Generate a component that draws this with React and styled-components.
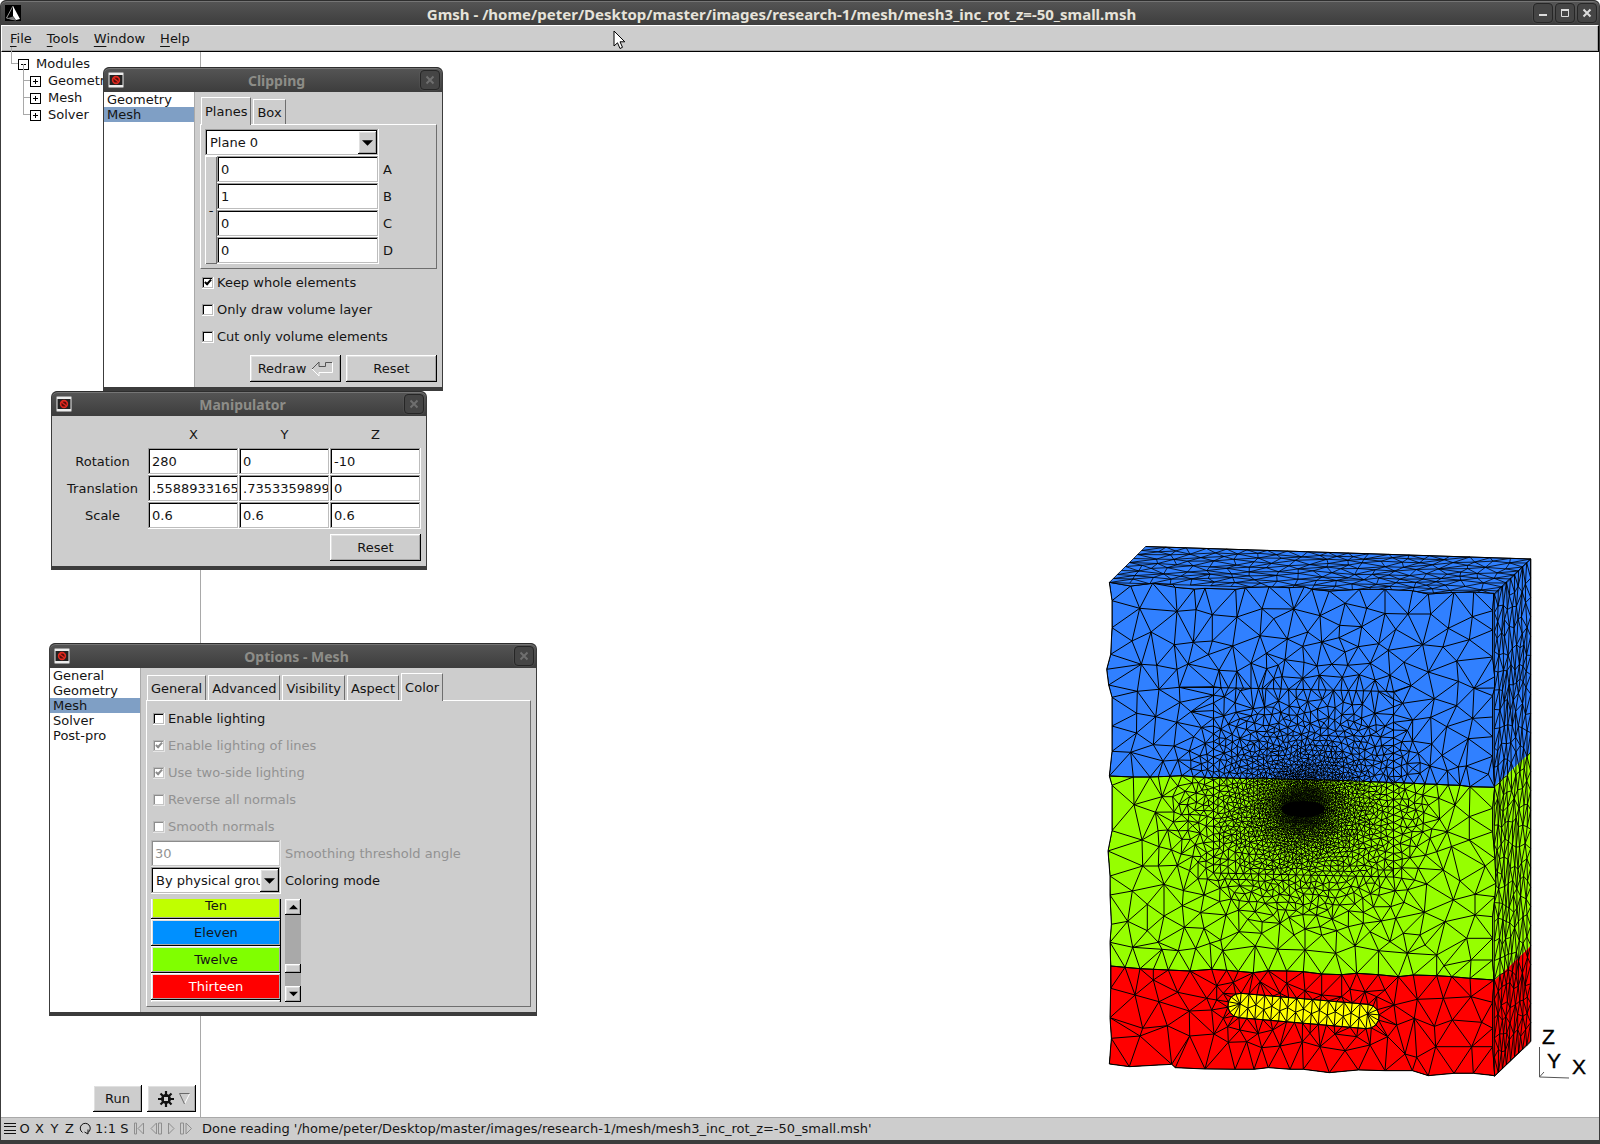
import React, { useMemo, useState } from "react";
import styled, { createGlobalStyle, css } from "styled-components";

const C = {
  face: "#cdcdcd",
  frame: "#3c3c3c",
  line: "#a9a9a9",
  ink: "#141414",
  dim: "#929292",
  select: "#7f9fc5",
};

const raised = css`
  box-shadow: inset -1px -1px 0 #000, inset 1px 1px 0 #fff,
    inset -2px -2px 0 #a6a6a6, inset 2px 2px 0 #e0e0e0;
`;

const sunken = css`
  box-shadow: inset 0 -1px 0 #fff, inset -1px 0 0 #fff, inset 1px 1px 0 #9c9c9c,
    inset -2px -2px 0 #bdbdbd, inset 2px 2px 0 #000;
`;

const sunkenDim = css`
  box-shadow: inset -1px -1px 0 #e6e6e6, inset 1px 1px 0 #b8b8b8,
    inset -2px -2px 0 #c6c6c6, inset 2px 2px 0 #8c8c8c;
`;

const Global = createGlobalStyle`
  *, *::before, *::after { box-sizing: border-box; }
  body { margin: 0; background: #fff; }
  body, button, input, select {
    font-family: "DejaVu Sans", sans-serif;
    font-size: 13px;
    line-height: 15px;
    color: ${C.ink};
  }
  button, input, select { margin: 0; padding: 0; border: 0; border-radius: 0; }
  ul { list-style: none; margin: 0; padding: 0; }
`;

/* ---------- window chrome ---------- */

const Screen = styled.div`
  position: relative;
  display: flex;
  flex-direction: column;
  min-height: 100vh;
  background: ${C.frame};
  padding: 0 1px 4px;
  border-radius: 6px 6px 0 0;
`;

const TitleBar = styled.header`
  display: flex;
  align-items: flex-start;
  height: 25px;
  padding: 2px 2px 0 4px;
  border-top: 1px solid #2e2e2e;
  box-shadow: inset 0 1px 0 #757575;
  background: linear-gradient(#555, #3d3d3d);
  border-radius: 6px 6px 0 0;
  svg { display: block; }
`;

const TitleIcon = styled.span`
  flex: 0 0 25px;
  padding-top: 2px;
`;

const Title = styled.h1`
  flex: 1;
  margin: 0;
  text-align: center;
  font: bold ${(p) => (p.$active ? 15 : 14)}px/22px "Noto Sans", sans-serif;
  color: ${(p) => (p.$active ? "#e6e3da" : "#8d8d88")};
  white-space: nowrap;
`;

const TitleButtons = styled.div`
  display: flex;
  gap: 2px;
`;

const TitleButton = styled.button`
  width: 20px;
  height: 20px;
  display: grid;
  place-items: center;
  background: #454545;
  border: 1px solid #262626;
  border-radius: 4px;
  box-shadow: 0 0 0 1px rgba(120, 120, 120, 0.15);
`;

const Dialog = styled.section`
  position: absolute;
  left: ${(p) => p.$x}px;
  top: ${(p) => p.$y}px;
  width: ${(p) => p.$w}px;
  background: ${C.frame};
  padding: 0 1px 4px;
  border-radius: 6px 6px 0 0;
`;

const DialogBody = styled.div`
  display: flex;
  background: ${C.face};
`;

/* ---------- main window ---------- */

const MenuBar = styled.nav`
  display: flex;
  gap: 13px;
  height: 27px;
  padding: 0 7px;
  align-items: center;
  background: ${C.face};
  border-top: 1px solid #fff;
  border-left: 1px solid #fff;
  border-bottom: 1px solid #000;
  border-right: 1px solid #000;
  box-shadow: inset -1px -1px 0 #a6a6a6;
`;

const MenuItem = styled.button`
  background: none;
  height: 24px;
  padding: 0 1px;
  &::first-letter { text-decoration: underline; text-underline-offset: 3px; }
`;

const Workspace = styled.div`
  flex: 1;
  display: flex;
  background: #fff;
`;

const Sidebar = styled.aside`
  flex: 0 0 200px;
  display: flex;
  flex-direction: column;
  justify-content: space-between;
  border-right: 1px solid ${C.line};
`;

const Tree = styled.ul`
  padding: 3px 0 0 17px;
`;

const Branch = styled.ul`
  padding-left: 12px;
`;

const Node = styled.li`
  position: relative;
  line-height: 17px;
  &::before {
    content: "";
    position: absolute;
    left: -7px;
    top: -8px;
    width: 7px;
    height: 17px;
    border: solid ${C.line};
    border-width: 0 0 1px 1px;
  }
`;

const Toggle = styled.button`
  position: relative;
  width: 11px;
  height: 11px;
  margin-right: 7px;
  vertical-align: -1px;
  background: #fff;
  border: 1px solid #000;
  &::before, &::after {
    content: "";
    position: absolute;
    left: 2px;
    top: 4px;
    width: 5px;
    height: 1px;
    background: #000;
  }
  &::after {
    transform: rotate(90deg);
    display: ${(p) => (p.$open ? "none" : "block")};
  }
`;

const RunBar = styled.div`
  display: flex;
  justify-content: flex-end;
  gap: 5px;
  padding: 5px 4px 5px 0;
`;

const Button = styled.button`
  display: flex;
  align-items: center;
  justify-content: center;
  gap: 5px;
  width: ${(p) => p.$w || 91}px;
  height: 27px;
  background: ${C.face};
  ${raised}
`;

const SettingsButton = styled(Button)`
  padding-left: 4px;
`;

const Viewport = styled.main`
  flex: 1;
  display: flex;
  align-items: flex-end;
  justify-content: flex-end;
  min-width: 0;
  svg { display: block; }
`;

const StatusBar = styled.footer`
  display: flex;
  align-items: center;
  height: 23px;
  padding: 0 0 2px 1px;
  background: ${C.face};
  border-top: 1px solid ${C.line};
`;

const StatusTools = styled.div`
  flex: 0 0 200px;
  display: flex;
  align-items: center;
`;

const StatusTool = styled.button`
  width: ${(p) => p.$w || 15}px;
  height: 20px;
  display: grid;
  place-items: center;
  background: none;
`;

const Pointer = styled.svg`
  position: absolute;
  left: 613px;
  top: 30px;
  pointer-events: none;
`;

/* ---------- dialog contents ---------- */

const List = styled.ul`
  flex: 0 0 91px;
  background: #fff;
  border-right: 1px solid ${C.line};
`;

const ListItem = styled.li`
  padding-left: 3px;
  background: ${(p) => (p.$on ? C.select : "none")};
`;

const Pane = styled.div`
  flex: 1;
  min-width: 0;
  padding: 5px;
`;

const Tabs = styled.div`
  display: flex;
  align-items: flex-end;
  gap: 2px;
  padding-left: 1px;
`;

const Tab = styled.button`
  position: relative;
  height: ${(p) => (p.$on ? 28 : 25)}px;
  margin-bottom: ${(p) => (p.$on ? -1 : 0)}px;
  padding: ${(p) => (p.$on ? "0 3px 1px" : "0 3px")};
  background: ${C.face};
  border: solid;
  border-width: 1px 1px 0 1px;
  border-color: #fff #6e6e6e #fff #fff;
`;

const TabPanel = styled.div`
  padding: 4px;
  border: 1px solid;
  border-color: #fff #6e6e6e #6e6e6e #fff;
`;

const Row = styled.div`
  display: flex;
  align-items: center;
  height: 27px;
  gap: 4px;
`;

const Field = styled.input`
  width: ${(p) => p.$w}px;
  height: 27px;
  padding: 0 2px 0 4px;
  background: #fff;
  outline: none;
  ${sunken}
  &:disabled { color: ${C.dim}; ${sunkenDim} }
`;

const Choice = styled.span`
  position: relative;
  display: block;
  width: ${(p) => p.$w}px;
  height: 27px;
`;

const Select = styled.select`
  appearance: none;
  width: 100%;
  height: 27px;
  padding: 0 20px 0 5px;
  overflow: hidden;
  background: #fff;
  outline: none;
  ${sunken}
`;

const ChoiceArrow = styled.span`
  position: absolute;
  right: 2px;
  top: 2px;
  width: 19px;
  height: 23px;
  display: grid;
  place-items: center;
  background: ${C.face};
  pointer-events: none;
  ${raised}
`;

const PlaneFields = styled.div`
  display: flex;
`;

const FlipButton = styled.button`
  width: 12px;
  background: ${C.face};
  box-shadow: inset 1px 1px 0 #fff, inset -1px -1px 0 #6e6e6e;
`;

const CheckLabel = styled.label`
  display: flex;
  align-items: center;
  gap: 3px;
  height: 27px;
  padding-left: 2px;
  color: ${(p) => (p.$off ? C.dim : C.ink)};
`;

const SideLabel = styled.label`
  color: ${(p) => (p.$off ? C.dim : C.ink)};
`;

const Check = styled.input`
  appearance: none;
  position: relative;
  width: 12px;
  height: 12px;
  background: #fff;
  ${(p) => (p.disabled ? sunkenDim : sunken)}
  &:checked::after {
    content: "";
    position: absolute;
    left: 4px;
    top: 1px;
    width: 4px;
    height: 7px;
    border: solid ${(p) => (p.disabled ? "#8c8c8c" : "#000")};
    border-width: 0 2px 2px 0;
    transform: rotate(42deg);
  }
`;

const Actions = styled.div`
  display: flex;
  justify-content: flex-end;
  gap: 5px;
  padding-top: 5px;
`;

const ManipBody = styled.div`
  padding: 5px;
  background: ${C.face};
`;

const ManipTable = styled.table`
  border-collapse: collapse;
  table-layout: fixed;
  width: 100%;
  th, td { padding: 0; height: 27px; text-align: center; font-weight: normal; }
  input { display: block; }
`;

const ColorArea = styled.div`
  display: flex;
  gap: 4px;
  height: 103px;
  margin-top: 5px;
`;

const ColorClip = styled.div`
  width: 130px;
  overflow: hidden;
`;

const ColorList = styled.div`
  margin-top: -7px;
`;

const ColorButton = styled.button`
  display: block;
  width: 130px;
  height: 27px;
  color: ${(p) => (p.$light ? "#fff" : C.ink)};
  background: ${(p) => p.$c};
  ${raised}
`;

const ScrollBar = styled.div`
  width: 16px;
  display: flex;
  flex-direction: column;
  background: ${C.line};
`;

const ScrollButton = styled.button`
  height: 16px;
  display: grid;
  place-items: center;
  background: ${C.face};
  ${raised}
`;

const ScrollTrack = styled.div`
  flex: 1;
  display: flex;
  flex-direction: column;
  justify-content: flex-end;
  padding-bottom: 13px;
`;

const ScrollThumb = styled.div`
  height: 9px;
  background: ${C.face};
  ${raised}
`;

/* ---------- icons ---------- */

const GmshLogo = () => (
  <svg width="16" height="16" viewBox="0 0 16 16">
    <rect width="16" height="16" fill="#000" />
    <path d="M8 1 L15 14 L11 15 L8 11Z" fill="#fff" />
    <path d="M8 1 L1.500 13 L8 14.500 L11 15" fill="none" stroke="#aaa" strokeWidth=".9" />
    <path d="M1.500 13.500 L8 11.500 L11 15Z" fill="#777" />
  </svg>
);

const XLogo = () => (
  <svg width="16" height="16" viewBox="0 0 16 16">
    <rect x=".5" y=".5" width="15" height="15" rx="1" fill="#ececec" stroke="#999" />
    <rect x="1.500" y="3" width="13" height="10" fill="#222" />
    <circle cx="8" cy="8" r="3.400" fill="#5a0d0a" stroke="#e02a20" strokeWidth="1.600" />
    <path d="M5.500 6 L10.500 10" stroke="#e02a20" strokeWidth="1.500" />
  </svg>
);

const CrossIcon = ({ c = "#6f6f6f" }) => (
  <svg width="10" height="10" viewBox="0 0 10 10">
    <path d="M1.500 1.500 L8.500 8.500 M8.500 1.500 L1.500 8.500" stroke={c} strokeWidth="2" />
  </svg>
);

const Triangle = ({ up, w = 11 }) => (
  <svg width={w} height="6" viewBox="0 0 10 5">
    <path d={up ? "M0 5 L5 0 L10 5Z" : "M0 0 L5 5 L10 0Z"} fill="#000" />
  </svg>
);

const ReturnIcon = () => (
  <svg width="22" height="16" viewBox="0 0 22 16" fill="none">
    <path d="M8 15 L8 11.500 L21.500 11.500 L21.500 1.500" stroke="#fff" />
    <path d="M1 8 L8 15" stroke="#fff" />
    <path d="M1 8 L8 1 L8 5.500 L14.500 5.500 L14.500 1.500 L21 1.500" stroke="#555" />
  </svg>
);

const GearIcon = () => (
  <svg width="16" height="16" viewBox="0 0 16 16">
    <g stroke="#111" strokeWidth="2.200">
      <path d="M8 0V16M0 8H16M2.500 2.500L13.500 13.500M13.500 2.500L2.500 13.500" />
    </g>
    <circle cx="8" cy="8" r="5" fill="#111" />
    <rect x="6" y="6" width="4" height="4" fill={C.face} />
  </svg>
);

const HollowTriangle = () => (
  <svg width="11" height="12" viewBox="0 0 11 12" fill="none">
    <path d="M10.500 1 L5.500 11" stroke="#fff" />
    <path d="M5.500 11 L.5 .5 H10.500" stroke="#6a6a6a" />
  </svg>
);

const Glyph = ({ d, w = 12, c = "#8e8e8e" }) => (
  <svg width={w} height="13" viewBox={`0 0 ${w} 13`} fill="none" stroke={c}>
    <path d={d} />
  </svg>
);

/* ---------- mesh ---------- */

function random(seed) {
  let s = seed;
  return () => {
    s = (s + 0x6d2b79f5) | 0;
    let t = Math.imul(s ^ (s >>> 15), 1 | s);
    t = (t + Math.imul(t ^ (t >>> 7), 61 | t)) ^ t;
    return ((t ^ (t >>> 14)) >>> 0) / 4294967296;
  };
}

function circle(p, i, j, k) {
  const [ax, ay] = p[i];
  const bx = p[j][0] - ax, by = p[j][1] - ay;
  const cx = p[k][0] - ax, cy = p[k][1] - ay;
  const d = 2 * (bx * cy - by * cx) || 1e-9;
  const b2 = bx * bx + by * by, c2 = cx * cx + cy * cy;
  const ux = (cy * b2 - by * c2) / d, uy = (bx * c2 - cx * b2) / d;
  return { i, j, k, x: ax + ux, y: ay + uy, r: ux * ux + uy * uy };
}

// Sweep-line Delaunay triangulation; returns the unique edges as index pairs.
function delaunayEdges(points, longest) {
  const n = points.length;
  const p = points.concat([[-9000, -9000], [9000, -9000], [700, 18000]]);
  const order = points.map((_, i) => i).sort((a, b) => p[a][0] - p[b][0]);
  let open = [circle(p, n, n + 1, n + 2)];
  const done = [];
  for (const c of order) {
    const [x, y] = p[c];
    const keep = [];
    const rim = new Map();
    for (const t of open) {
      const dx = x - t.x, dy = y - t.y;
      if (dx > 0 && dx * dx > t.r) { done.push(t); continue; }
      if (dx * dx + dy * dy > t.r) { keep.push(t); continue; }
      for (const [a, b] of [[t.i, t.j], [t.j, t.k], [t.k, t.i]]) {
        const key = a < b ? a * 100000 + b : b * 100000 + a;
        if (rim.has(key)) rim.set(key, null);
        else rim.set(key, [a, b]);
      }
    }
    for (const e of rim.values()) if (e) keep.push(circle(p, e[0], e[1], c));
    open = keep;
  }
  const edges = new Map();
  for (const t of done.concat(open)) {
    if (t.i >= n || t.j >= n || t.k >= n) continue;
    for (const [a, b] of [[t.i, t.j], [t.j, t.k], [t.k, t.i]]) {
      if (Math.hypot(p[a][0] - p[b][0], p[a][1] - p[b][1]) > longest) continue;
      edges.set(a < b ? a * 100000 + b : b * 100000 + a, [a, b]);
    }
  }
  return [...edges.values()];
}

const toPath = (pts, edges) =>
  edges
    .map(([a, b]) => `M${pts[a][0].toFixed(1)} ${pts[a][1].toFixed(1)}L${pts[b][0].toFixed(1)} ${pts[b][1].toFixed(1)}`)
    .join("");

// Vertex lists are stored in thirds of a pixel, relative to an origin.
const read = (text, oy) =>
  text.trim().split(/\s+/).map((s) => {
    const [x, y] = s.split(",").map(Number);
    return [1090 + x / 3, oy + y / 3];
  });

const TOP = read("58,157 122,168 188,160 247,163 256,172 313,177 345,175 437,178 466,173 537,170 597,173 643,170 666,178 718,183 808,178 885,178 968,182 1015,192 1092,187 1151,186 1212,190", 530);
const LEFT = read("66,212 66,293 62,373 50,418 56,465 66,502 66,588 66,664 58,738 66,766 66,902 54,963 60,1038 60,1095 64,1183 60,1237 62,1308 62,1375 60,1463 64,1525 58,1602", 530);
const BOTTOM = read("118,860 245,853 256,863 345,867 435,868 492,868 535,863 600,868 640,868 718,878 805,870 885,872 967,872 1015,887 1092,880 1150,880 1214,887", 780);
const RIGHT = read("1208,242 1208,300 1208,381 1214,440 1214,474 1208,497 1208,561 1208,620 1208,679 1214,772 1208,835 1208,905 1215,985 1218,1060 1215,1100 1208,1160 1208,1225 1208,1290 1212,1350 1208,1417 1208,1495 1208,1550", 530).reverse();
const MID1 = read("58,738 130,741 180,741 205,740 240,739 275,737 310,740 345,742 367,743 390,743 410,744 430,744 450,745 470,745 490,745 510,745 530,745 548,746 566,747 584,747 602,748 620,748 638,749 656,749 674,750 692,750 710,750 728,751 746,752 775,752 797,753 820,754 842,755 866,756 890,757 915,757 942,759 972,760 1005,762 1040,763 1075,765 1110,766 1140,770 1214,772", 530);
const MID2 = read("62,558 105,562 150,566 190,568 235,570 300,573 365,568 410,571 445,574 490,578 535,572 590,573 640,575 695,582 755,584 800,580 865,584 925,590 970,585 1040,587 1085,590 1140,595 1212,600", 780);

const BLUE = read(`149,235 261,244 318,239 367,254 441,261 516,236 611,237 551,266 690,257 749,286 815,290 917,298
1022,252 1147,260 1075,295 183,306 126,333 253,344 310,337 367,333 428,348 510,317 592,327 653,306 695,336 747,323 638,349
998,344 1138,329 154,403 200,406 355,374 294,402 529,370 585,389 565,405 483,400 642,397 681,408 805,350 866,341 895,361
942,397 765,366 1100,393 725,403 773,406 841,400 261,418 387,421 441,424 530,416 551,445 638,445 1015,426 900,436 688,436
757,442 142,484 207,478 268,472 371,470 451,482 516,476 576,440 1105,454 1152,475 963,467 912,487 855,450 808,434 140,550
197,560 270,517 403,500 1033,506 1100,527 1022,562 938,520 122,667 190,644 260,577 252,648 303,545 1070,590 1135,626
1025,642 968,570 219,693 264,690 298,663 1056,676 1105,711 1129,708 1195,733 985,670 1072,722 1020,708 990,730`, 530);
const GREEN = read(`132,74 156,180 158,258 127,333 113,424 216,50 252,96 292,74 204,152 233,150 207,200 205,258 262,256
222,313 308,229 276,178 324,296 277,377 172,373 172,452 222,408 205,487 128,502 216,508 283,442 332,398 342,345 408,405
390,325 424,357 342,445 360,490 317,505 392,480 265,512 398,512 496,498 447,455 473,418 525,370 495,395 550,406 570,430
563,508 515,460 645,510 645,447 612,465 664,368 658,325 600,347 700,332 713,390 690,440 695,466 737,520 740,452 770,345
818,354 820,430 775,440 795,498 840,455 866,346 902,380 942,367 917,415 940,460 900,485 866,512 1010,312 1003,397
1005,495 1065,425 1090,360 1060,270 1110,303 1155,343 1155,405 1130,475 1062,557 1143,540 1186,258 1138,180 1138,110
1095,75 1072,155 1040,215 985,265 1046,55 998,45 1000,130 1020,175 980,200 968,120 935,295 908,270 990,465 1040,525`, 780);
const RED = read(`135,645 150,768 158,745 207,665 190,600 263,637 232,737 298,693 299,768 350,655 380,617 380,660 372,762
400,715 415,787 413,740 470,785 515,803 570,798 548,750 637,785 690,800 660,760 735,762 800,770 765,812 840,795 893,770
945,822 980,832 1037,800 1145,800 1087,720 1143,650 1175,727 1060,655 982,658 973,715 912,675 920,735 885,630 860,650
825,635 780,628 755,650 695,645 645,632 590,610 570,640 510,605 430,607 400,640 365,690`, 780);

function capsule(x1, y1, x2, y2, r) {
  const out = [];
  const a = Math.atan2(y2 - y1, x2 - x1);
  const arc = (x, y, from) => {
    for (let i = 0; i <= 7; i++) {
      const t = from + (Math.PI * i) / 7;
      out.push([x + r * Math.cos(t), y + r * Math.sin(t)]);
    }
  };
  const side = (sx, sy, ex, ey) => {
    for (let i = 1; i < 16; i++) out.push([sx + ((ex - sx) * i) / 16, sy + ((ey - sy) * i) / 16]);
  };
  const nx = -Math.sin(a) * r, ny = Math.cos(a) * r;
  arc(x2, y2, a - Math.PI / 2);
  side(x2 + nx, y2 + ny, x1 + nx, y1 + ny);
  arc(x1, y1, a + Math.PI / 2);
  side(x1 - nx, y1 - ny, x2 - nx, y2 - ny);
  return out;
}

const INCLUSION = capsule(1240, 1005.5, 1367, 1016.5, 12.2);

function scatter(pts, draw, size, tries) {
  const cell = 8;
  const grid = new Map();
  const put = (p) => {
    const k = Math.floor(p[0] / cell) * 10000 + Math.floor(p[1] / cell);
    if (!grid.has(k)) grid.set(k, []);
    grid.get(k).push(p);
  };
  pts.forEach(put);
  for (let t = 0; t < tries; t++) {
    const p = draw();
    if (!p) continue;
    const h = size(p[0], p[1]);
    const gx = Math.floor(p[0] / cell), gy = Math.floor(p[1] / cell), m = Math.ceil(h / cell);
    let free = true;
    for (let i = gx - m; free && i <= gx + m; i++)
      for (let j = gy - m; free && j <= gy + m; j++) {
        const list = grid.get(i * 10000 + j);
        if (list) for (const q of list) if (Math.hypot(p[0] - q[0], p[1] - q[1]) < h) { free = false; break; }
      }
    if (free) { pts.push(p); put(p); }
  }
  return pts;
}

function buildFront() {
  const rnd = random(11);
  const pts = [...TOP, ...LEFT, ...BOTTOM, ...RIGHT, ...MID1.slice(1, -1), ...MID2, ...BLUE, ...GREEN, ...RED, ...INCLUSION];
  for (let i = 1; i < 16; i++) pts.push([1240 + (127 * i) / 16, 1005.5 + (11 * i) / 16 + (i % 2 ? 2 : -2)]);
  for (let i = 0; i <= 24; i++) {
    const s = i / 24;
    pts.push([1213.5 + 180 * s, 687.5 + 4 * s], [1213.5 + 180 * s, 873 + 4 * s]);
    if (i > 0 && i < 24) pts.push([1213.5, 687.5 + 185 * s], [1393.5, 691.5 + 185 * s]);
  }
  const seedPts = pts.map(([x, y]) => [x + rnd() * 0.01, y + rnd() * 0.01]);
  const size = (x, y) => {
    const d = Math.hypot((x - 1303) * 0.95, (y - 808) * 1.1);
    let h = Math.max(1.3, 0.4 + d * 0.055);
    if (d > 112) h = 6.5 + (d - 112) * 0.25;
    const q = Math.hypot(Math.max(0, Math.abs(x - 1303) - 65), y - 1011);
    if (q < 80) h = Math.min(h, 7 + q * 0.25);
    return Math.min(h, 19);
  };
  scatter(seedPts, () => {
    const r = 5 * Math.pow(60, rnd());
    const a = rnd() * Math.PI * 2;
    const x = 1303 + r * Math.cos(a), y = 808 + (r * Math.sin(a)) / 1.15;
    return x > 1116 && x < 1488 && y > 597 && y < 1062 ? [x, y] : null;
  }, size, 90000);
  return toPath(seedPts, delaunayEdges(seedPts, 60));
}

// A regular-sized mesh on a flat w by h sheet, projected onto a parallelogram.
function buildFace(seed, w, h, step, project) {
  const rnd = random(seed);
  const pts = [];
  const nx = Math.round(w / step), ny = Math.round(h / step);
  for (let i = 0; i <= nx; i++) pts.push([(w * i) / nx, rnd() * 0.01], [(w * i) / nx, h + rnd() * 0.01]);
  for (let j = 1; j < ny; j++) pts.push([rnd() * 0.01, (h * j) / ny], [w + rnd() * 0.01, (h * j) / ny]);
  scatter(pts, () => [rnd() * w, rnd() * h], () => step * 0.8, 9000);
  return toPath(pts.map(project), delaunayEdges(pts, step * 4));
}

const poly = (pts) => pts.map((p) => p.join(",")).join(" ");

function MeshView() {
  const mesh = useMemo(
    () => ({
      front: buildFront(),
      side: buildFace(5, 175, 483, 19, ([u, v]) => [1494.3 + (u / 175) * 36.4, 593.5 + v - (u / 175) * 34.7]),
      top: buildFace(9, 385, 175, 20, ([u, v]) => [1145.7 + u - (v / 175) * 36.4, 546.5 + (u / 385) * 12.5 + (v / 175) * 36]),
    }),
    []
  );
  const outline = [...TOP, ...[...RIGHT].reverse(), ...[...BOTTOM].reverse(), ...[...LEFT].reverse()];
  return (
    <svg width="509" height="587" viewBox="1090 530 509 587" role="img" aria-label="Mesh view">
      <clipPath id="front"><polygon points={poly(outline)} /></clipPath>
      <polygon points={poly([[1145.7, 546.5], [1530.7, 559], [1530.7, 752], [1494, 787], [1491, 787], [1491, 600], ...[...TOP].reverse()])} fill="#3080ff" />
      <polygon points="1530.700,752 1530.700,946 1494,981 1491,981 1491,787 1494,787" fill="#96ff00" />
      <polygon points="1530.700,946 1530.700,1041 1494.700,1075.700 1491,1074 1491,981 1494,981" fill="#f00" />
      <g fill="none" stroke="#000">
        <path d={mesh.top} strokeWidth=".8" />
        <path d={mesh.side} strokeWidth=".9" />
        <path d="M1145.700 546.500 L1530.700 559 V1041 L1494.700 1075.700" />
      </g>
      <g clipPath="url(#front)">
        <rect x="1100" y="570" width="400" height="520" fill="#3080ff" />
        <polygon points={poly([[1100, 776], ...MID1, [1500, 787], [1500, 1090], [1100, 1090]])} fill="#96ff00" />
        <polygon points={poly([[1100, 966], ...MID2, [1500, 980], [1500, 1090], [1100, 1090]])} fill="#f00" />
        <polygon points={poly(INCLUSION)} fill="#ff0" stroke="#000" />
        <path d={mesh.front} fill="none" stroke="#000" />
        <ellipse cx="1303" cy="809" rx="22" ry="8" />
      </g>
      <g fill="none" stroke="#000">
        <polyline points={poly(MID1)} />
        <polyline points={poly(MID2)} />
        <polygon points={poly(outline)} />
      </g>
      <g fill="none" stroke="#555">
        <path d="M1539.500 1047 V1077 L1569 1078 M1539.500 1077 L1544 1072" />
      </g>
      <g fontFamily="'Liberation Sans', Arial, sans-serif" fontSize="21" stroke="#000" strokeWidth=".4">
        <text x="1542" y="1044">Z</text>
        <text x="1547" y="1068">Y</text>
        <text x="1572" y="1074">X</text>
      </g>
    </svg>
  );
}

/* ---------- composition ---------- */

function Window({ x, y, w, title, children }) {
  return (
    <Dialog $x={x} $y={y} $w={w} aria-label={title}>
      <TitleBar>
        <TitleIcon><XLogo /></TitleIcon>
        <Title as="h2">{title}</Title>
        <TitleButtons>
          <TitleButton aria-label="Close"><CrossIcon /></TitleButton>
        </TitleButtons>
      </TitleBar>
      {children}
    </Dialog>
  );
}

function Browser({ items, value }) {
  return (
    <List>
      {items.map((it) => <ListItem key={it} $on={it === value}>{it}</ListItem>)}
    </List>
  );
}

function TabRow({ items, value }) {
  return (
    <Tabs role="tablist">
      {items.map((t) => (
        <Tab key={t} role="tab" aria-selected={t === value} $on={t === value}>{t}</Tab>
      ))}
    </Tabs>
  );
}

function CheckRow({ label, on, off }) {
  const [checked, setChecked] = useState(!!on);
  return (
    <CheckLabel $off={off}>
      <Check type="checkbox" checked={checked} disabled={off} onChange={() => setChecked(!checked)} />
      {label}
    </CheckLabel>
  );
}

function Dropdown({ id, w, value }) {
  return (
    <Choice $w={w}>
      <Select id={id} aria-label={value} defaultValue={value}>
        <option>{value}</option>
      </Select>
      <ChoiceArrow><Triangle /></ChoiceArrow>
    </Choice>
  );
}

function Clipping() {
  return (
    <Window x={103} y={67} w={340} title="Clipping">
      <DialogBody>
        <Browser items={["Geometry", "Mesh"]} value="Mesh" />
        <Pane>
          <TabRow items={["Planes", "Box"]} value="Planes" />
          <TabPanel>
            <Dropdown w={174} value="Plane 0" />
            <PlaneFields>
              <FlipButton>-</FlipButton>
              <div>
                {[["A", "0"], ["B", "1"], ["C", "0"], ["D", "0"]].map(([k, v]) => (
                  <Row key={k}>
                    <Field id={`plane-${k}`} $w={162} defaultValue={v} />
                    <SideLabel htmlFor={`plane-${k}`}>{k}</SideLabel>
                  </Row>
                ))}
              </div>
            </PlaneFields>
          </TabPanel>
          <CheckRow label="Keep whole elements" on />
          <CheckRow label="Only draw volume layer" />
          <CheckRow label="Cut only volume elements" />
          <Actions>
            <Button>Redraw <ReturnIcon /></Button>
            <Button>Reset</Button>
          </Actions>
        </Pane>
      </DialogBody>
    </Window>
  );
}

const MANIPULATOR = [
  ["Rotation", "280", "0", "-10"],
  ["Translation", ".5588933165", ".7353359899", "0"],
  ["Scale", "0.6", "0.6", "0.6"],
];

function Manipulator() {
  return (
    <Window x={51} y={391} w={376} title="Manipulator">
      <ManipBody>
        <ManipTable>
          <thead>
            <tr><td />{["X", "Y", "Z"].map((a) => <th key={a} scope="col">{a}</th>)}</tr>
          </thead>
          <tbody>
            {MANIPULATOR.map(([name, ...vals]) => (
              <tr key={name}>
                <th scope="row">{name}</th>
                {vals.map((v, i) => (
                  <td key={i}><Field $w={91} defaultValue={v} aria-label={`${name} ${"XYZ"[i]}`} /></td>
                ))}
              </tr>
            ))}
          </tbody>
        </ManipTable>
        <Actions><Button>Reset</Button></Actions>
      </ManipBody>
    </Window>
  );
}

const COLORS = [["Ten", "#c0ff00"], ["Eleven", "#0090ff"], ["Twelve", "#80ff00"], ["Thirteen", "#ff0000"], ["", "#cdcdcd"]];

function Options() {
  return (
    <Window x={49} y={643} w={488} title="Options - Mesh">
      <DialogBody>
        <Browser items={["General", "Geometry", "Mesh", "Solver", "Post-pro"]} value="Mesh" />
        <Pane>
          <TabRow items={["General", "Advanced", "Visibility", "Aspect", "Color"]} value="Color" />
          <TabPanel>
            <CheckRow label="Enable lighting" />
            <CheckRow label="Enable lighting of lines" on off />
            <CheckRow label="Use two-side lighting" on off />
            <CheckRow label="Reverse all normals" off />
            <CheckRow label="Smooth normals" off />
            <Row>
              <Field id="threshold" $w={130} defaultValue="30" disabled />
              <SideLabel htmlFor="threshold" $off>Smoothing threshold angle</SideLabel>
            </Row>
            <Row>
              <Dropdown id="coloring" w={130} value="By physical group" />
              <SideLabel htmlFor="coloring">Coloring mode</SideLabel>
            </Row>
            <ColorArea>
              <ColorClip>
                <ColorList>
                  {COLORS.map(([name, c]) => (
                    <ColorButton key={c} $c={c} $light={name === "Thirteen"}>{name}</ColorButton>
                  ))}
                </ColorList>
              </ColorClip>
              <ScrollBar>
                <ScrollButton aria-label="Scroll up"><Triangle up w={9} /></ScrollButton>
                <ScrollTrack><ScrollThumb /></ScrollTrack>
                <ScrollButton aria-label="Scroll down"><Triangle w={9} /></ScrollButton>
              </ScrollBar>
            </ColorArea>
          </TabPanel>
        </Pane>
      </DialogBody>
    </Window>
  );
}

export default function App() {
  return (
    <>
      <Global />
      <Screen>
        <TitleBar>
          <TitleIcon><GmshLogo /></TitleIcon>
          <Title $active>Gmsh - /home/peter/Desktop/master/images/research-1/mesh/mesh3_inc_rot_z=-50_small.msh</Title>
          <TitleButtons>
            <TitleButton aria-label="Minimize">
              <svg width="10" height="10"><rect x="1" y="6" width="8" height="2" fill="#dcdcdc" /></svg>
            </TitleButton>
            <TitleButton aria-label="Maximize">
              <svg width="10" height="10">
                <path d="M1.500 2V8.500H8.500V2" fill="none" stroke="#dcdcdc" />
                <rect x="1" y="1" width="8" height="2" fill="#dcdcdc" />
              </svg>
            </TitleButton>
            <TitleButton aria-label="Close"><CrossIcon c="#dcdcdc" /></TitleButton>
          </TitleButtons>
        </TitleBar>
        <MenuBar>
          {["File", "Tools", "Window", "Help"].map((m) => <MenuItem key={m}>{m}</MenuItem>)}
        </MenuBar>
        <Workspace>
          <Sidebar>
            <Tree>
              <Node>
                <Toggle $open aria-label="Collapse Modules" />Modules
                <Branch>
                  {["Geometry", "Mesh", "Solver"].map((m) => (
                    <Node key={m}><Toggle aria-label={`Expand ${m}`} />{m}</Node>
                  ))}
                </Branch>
              </Node>
            </Tree>
            <RunBar>
              <Button $w={49}>Run</Button>
              <SettingsButton $w={49} aria-label="Settings"><GearIcon /><HollowTriangle /></SettingsButton>
            </RunBar>
          </Sidebar>
          <Viewport><MeshView /></Viewport>
        </Workspace>
        <StatusBar>
          <StatusTools>
            <StatusTool aria-label="Menu"><Glyph c="#111" d="M0 1.500H12M0 4.500H12M0 8.500H12M0 11.500H12" /></StatusTool>
            <StatusTool>O</StatusTool>
            <StatusTool>X</StatusTool>
            <StatusTool>Y</StatusTool>
            <StatusTool>Z</StatusTool>
            <StatusTool aria-label="Rotate"><Glyph c="#111" d="M3.500 10.500A5 5 0 1 1 9 10.500M9 7.500V12L5.500 10" /></StatusTool>
            <StatusTool $w={27}>1:1</StatusTool>
            <StatusTool $w={11}>S</StatusTool>
            <StatusTool $w={18} aria-label="First"><Glyph d="M1.500 1V12H3.500V1ZM10.500 1L5 6.500L10.500 12Z" /></StatusTool>
            <StatusTool aria-label="Previous"><Glyph d="M6.500 1L1 6.500L6.500 12ZM8.500 1V12H11.500V1Z" /></StatusTool>
            <StatusTool aria-label="Play"><Glyph d="M3.500 1L9 6.500L3.500 12Z" /></StatusTool>
            <StatusTool aria-label="Next"><Glyph d="M.5 1V12H3.500V1ZM6 1L11.500 6.500L6 12Z" /></StatusTool>
          </StatusTools>
          <span>Done reading '/home/peter/Desktop/master/images/research-1/mesh/mesh3_inc_rot_z=-50_small.msh'</span>
        </StatusBar>
        <Options />
        <Clipping />
        <Manipulator />
        <Pointer width="13" height="20" viewBox="0 0 13 20">
          <path d="M1 1V16L4.500 12.800L7 18.500L9.500 17.300L7 11.800H11.800Z" fill="#fff" stroke="#000" />
        </Pointer>
      </Screen>
    </>
  );
}
